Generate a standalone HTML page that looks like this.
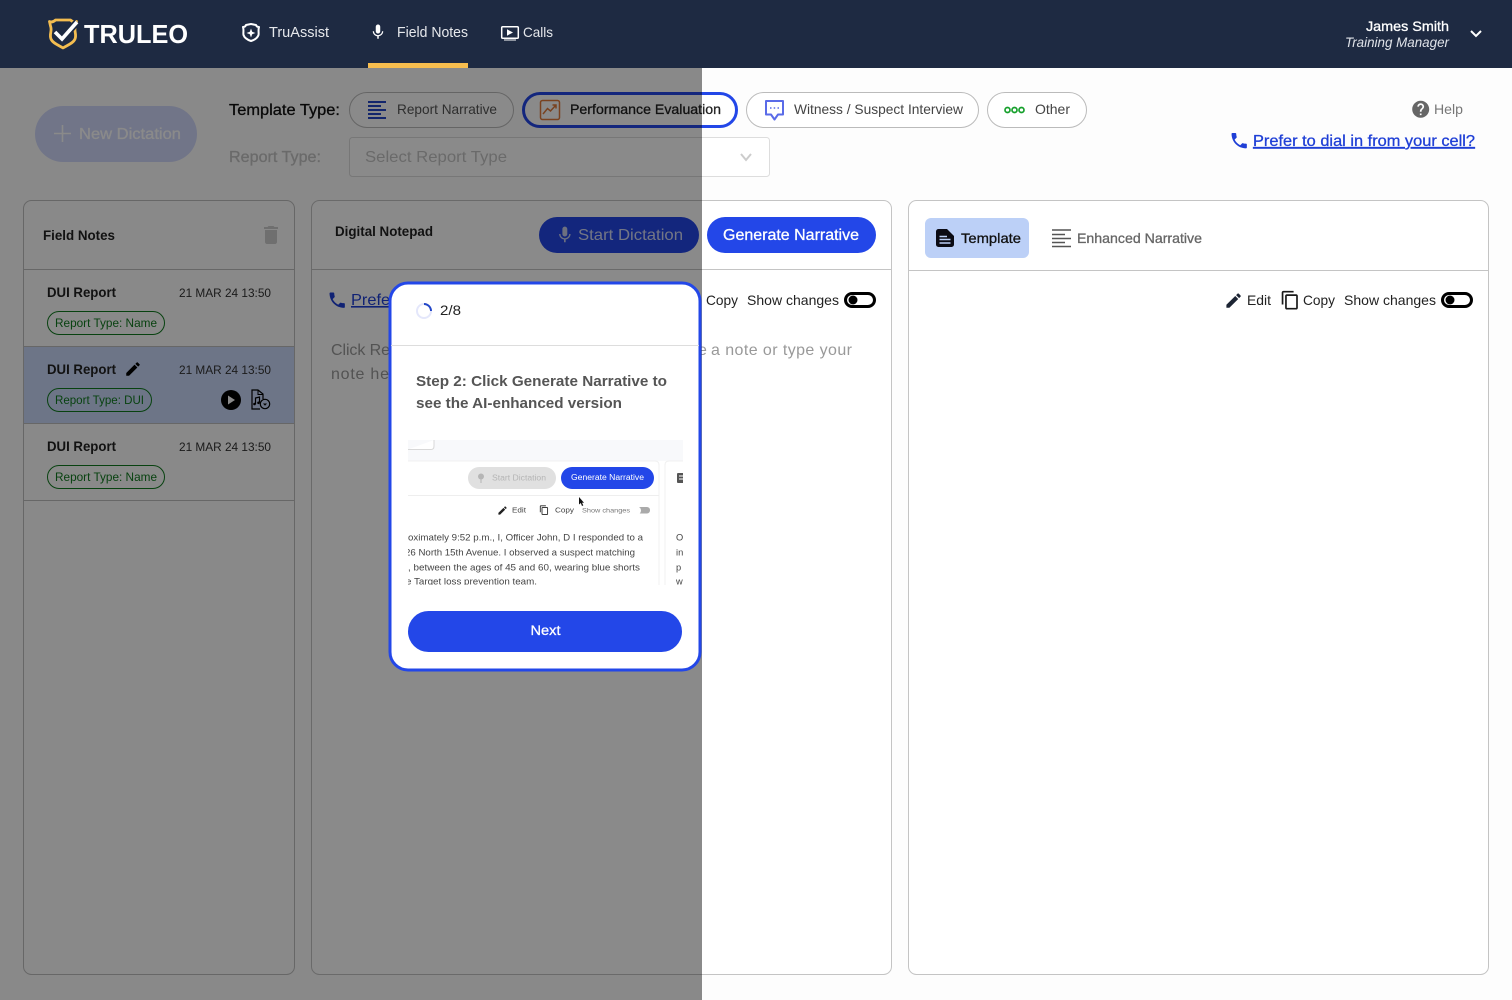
<!DOCTYPE html>
<html lang="en"><head><meta charset="utf-8"><title>Truleo Field Notes</title>
<style>
html,body{margin:0;padding:0;background:#fdfdfd;width:1512px;height:1000px;overflow:hidden}
svg{display:block}
text{font-family:"Liberation Sans",Arial,sans-serif;white-space:pre}
.m{stroke-width:.3}
</style></head><body>
<svg xmlns="http://www.w3.org/2000/svg" width="1512" height="1000" viewBox="0 0 1512 1000">
<defs>
<clipPath id="mini"><rect x="408" y="440" width="275" height="145"/></clipPath>
</defs>
<rect width="1512" height="1000" fill="#fdfdfd"/>

<!-- top controls -->
<rect x="35" y="106" width="162" height="56" rx="28" fill="#d1d8fb"/>
<path d="M54 133.500H71M62.500 125V142" stroke="#fff" stroke-width="1.600" fill="none"/>
<text x="79" y="139" font-size="16" fill="#fff" class="m" stroke="#fff" textLength="102" lengthAdjust="spacingAndGlyphs">New Dictation</text>
<text x="229" y="115" font-size="16" fill="#111" class="m" stroke="#111" textLength="111" lengthAdjust="spacingAndGlyphs">Template Type:</text>
<text x="229" y="162" font-size="16" fill="#c4c4c4" class="m" stroke="#c4c4c4" textLength="92" lengthAdjust="spacingAndGlyphs">Report Type:</text>

<rect x="349.500" y="92.500" width="164" height="35" rx="17.500" fill="#fff" stroke="#bbb"/>
<path d="M368 102H386M368 106H381M368 110H386M368 114H381M368 118H386" stroke="#2347c8" stroke-width="2" fill="none"/>
<text x="397" y="114" font-size="14" fill="#555" textLength="100" lengthAdjust="spacingAndGlyphs">Report Narrative</text>

<rect x="523.500" y="93.500" width="213" height="33" rx="16.500" fill="#fff" stroke="#2347e8" stroke-width="3"/>
<rect x="540.500" y="100.500" width="19" height="19" rx="2" fill="none" stroke="#e07b3c" stroke-width="1.500"/>
<path d="M543 114L547.500 108.500L550.500 111L556 105M552.500 105H556V108.500" stroke="#e07b3c" stroke-width="1.500" fill="none"/>
<text x="570" y="114" font-size="14" fill="#222" class="m" stroke="#222" textLength="151" lengthAdjust="spacingAndGlyphs">Performance Evaluation</text>

<rect x="746.500" y="92.500" width="232" height="35" rx="17.500" fill="#fff" stroke="#bbb"/>
<path d="M766 101H783V114.500H778L774.500 119.500L771 114.500H766Z" fill="none" stroke="#5a6be8" stroke-width="2" stroke-linejoin="round"/>
<path d="M770 108H771.500M773.700 108H775.200M777.500 108H779" stroke="#5a6be8" stroke-width="1.500"/>
<text x="794" y="114" font-size="14" fill="#444" textLength="169" lengthAdjust="spacingAndGlyphs">Witness / Suspect Interview</text>

<rect x="987.500" y="92.500" width="99" height="35" rx="17.500" fill="#fff" stroke="#bbb"/>
<g fill="none" stroke="#16a02c" stroke-width="1.700"><circle cx="1007.500" cy="110" r="2.500"/><circle cx="1014.500" cy="110" r="2.500"/><circle cx="1021.500" cy="110" r="2.500"/></g>
<text x="1035" y="114" font-size="14" fill="#444" textLength="35" lengthAdjust="spacingAndGlyphs">Other</text>

<rect x="349.500" y="137.500" width="420" height="39" rx="3" fill="#fff" stroke="#ddd"/>
<text x="365" y="162" font-size="16" fill="#c4c4c4" textLength="142" lengthAdjust="spacingAndGlyphs">Select Report Type</text>
<path d="M741 154L746 160L751 154" fill="none" stroke="#ccc" stroke-width="2"/>

<path transform="translate(1410.500,99) scale(.85)" fill="#666" d="M12 2C6.480 2 2 6.480 2 12s4.480 10 10 10 10-4.480 10-10S17.520 2 12 2zm1 17h-2v-2h2v2zm2.070-7.750l-.9.920C13.450 12.900 13 13.500 13 15h-2v-.5c0-1.100.450-2.100 1.170-2.830l1.240-1.260c.370-.360.590-.860.590-1.410 0-1.100-.9-2-2-2s-2 .9-2 2H8c0-2.210 1.790-4 4-4s4 1.790 4 4c0 .880-.360 1.680-.930 2.250z"/>
<text x="1434" y="114" font-size="14" fill="#777" textLength="29" lengthAdjust="spacingAndGlyphs">Help</text>
<path transform="translate(1229,130.500) scale(.85)" fill="#1f3fd6" d="M6.620 10.790c1.440 2.830 3.760 5.140 6.590 6.590l2.200-2.200c.270-.270.670-.360 1.020-.240 1.120.370 2.330.570 3.570.570.550 0 1 .450 1 1V20c0 .550-.450 1-1 1-9.390 0-17-7.610-17-17 0-.550.450-1 1-1h3.500c.550 0 1 .450 1 1 0 1.250.200 2.450.570 3.570.110.350.030.740-.250 1.020l-2.200 2.200z"/>
<text x="1253" y="146" font-size="16" fill="#1f3fd6" class="m" stroke="#1f3fd6" text-decoration="underline" textLength="222" lengthAdjust="spacingAndGlyphs">Prefer to dial in from your cell?</text>

<!-- Field Notes panel -->
<rect x="23.500" y="200.500" width="271" height="774" rx="8" fill="#fdfdfd" stroke="#bfbfbf"/>
<text x="43" y="240" font-size="14" font-weight="bold" fill="#222" textLength="72" lengthAdjust="spacingAndGlyphs">Field Notes</text>
<path transform="translate(259,223) scale(1)" fill="#cdcdcd" d="M6 19c0 1.100.9 2 2 2h8c1.100 0 2-.9 2-2V7H6v12zM19 4h-3.500l-1-1h-5l-1 1H5v2h14V4z"/>
<path d="M24 269.500H294" stroke="#bfbfbf"/>
<rect x="24" y="347" width="270" height="76" fill="#cad8f9"/>
<path d="M24 346.500H294M24 423.500H294M24 500.500H294" stroke="#bfbfbf"/>

<text x="47" y="297" font-size="14" font-weight="bold" fill="#222" textLength="69" lengthAdjust="spacingAndGlyphs">DUI Report</text>
<text x="179" y="297" font-size="12" fill="#333" textLength="92" lengthAdjust="spacingAndGlyphs">21 MAR 24 13:50</text>
<rect x="47.500" y="311.500" width="117" height="23" rx="11.500" fill="none" stroke="#0f7a1e"/>
<text x="55" y="327" font-size="12" fill="#0f7a1e" textLength="102" lengthAdjust="spacingAndGlyphs">Report Type: Name</text>

<text x="47" y="374" font-size="14" font-weight="bold" fill="#222" textLength="69" lengthAdjust="spacingAndGlyphs">DUI Report</text>
<path transform="translate(124,360) scale(.75)" fill="#000" d="M3 17.250V21h3.750L17.810 9.940l-3.750-3.750L3 17.250zM20.710 7.040a1 1 0 0 0 0-1.410l-2.340-2.340a1 1 0 0 0-1.410 0l-1.830 1.830 3.750 3.750 1.830-1.830z"/>
<text x="179" y="374" font-size="12" fill="#333" textLength="92" lengthAdjust="spacingAndGlyphs">21 MAR 24 13:50</text>
<rect x="47.500" y="388.500" width="104" height="23" rx="11.500" fill="none" stroke="#0f7a1e"/>
<text x="55" y="404" font-size="12" fill="#0f7a1e" textLength="89" lengthAdjust="spacingAndGlyphs">Report Type: DUI</text>
<circle cx="231" cy="400" r="10" fill="#000"/>
<path d="M228 395.500L235 400L228 404.500Z" fill="#fff"/>
<path d="M263 399V394L258 390H252V409H260" fill="none" stroke="#000" stroke-width="1.200"/>
<path d="M258 390V394.500H263" fill="none" stroke="#000" stroke-width="1"/>
<path d="M255.500 404V398L259.500 397V402.500" fill="none" stroke="#000" stroke-width="1.200"/>
<circle cx="254.500" cy="404" r="1.300" fill="#000"/><circle cx="258.500" cy="402.800" r="1.300" fill="#000"/>
<circle cx="265" cy="404" r="4.700" fill="#cad8f9" stroke="#000" stroke-width="1.200"/>
<path d="M263 403.500H267L265 405.700Z" fill="#000"/>

<text x="47" y="451" font-size="14" font-weight="bold" fill="#222" textLength="69" lengthAdjust="spacingAndGlyphs">DUI Report</text>
<text x="179" y="451" font-size="12" fill="#333" textLength="92" lengthAdjust="spacingAndGlyphs">21 MAR 24 13:50</text>
<rect x="47.500" y="465.500" width="117" height="23" rx="11.500" fill="none" stroke="#0f7a1e"/>
<text x="55" y="481" font-size="12" fill="#0f7a1e" textLength="102" lengthAdjust="spacingAndGlyphs">Report Type: Name</text>

<!-- Digital Notepad panel -->
<rect x="311.500" y="200.500" width="580" height="774" rx="8" fill="#fff" stroke="#c4c4c4"/>
<text x="335" y="236" font-size="14" font-weight="bold" fill="#222" textLength="98" lengthAdjust="spacingAndGlyphs">Digital Notepad</text>
<rect x="539" y="217" width="160" height="36" rx="18" fill="#2347e8"/>
<path transform="translate(555,225) scale(.82)" fill="#c9d0ea" d="M12 14c1.660 0 3-1.340 3-3V5c0-1.660-1.340-3-3-3S9 3.340 9 5v6c0 1.660 1.340 3 3 3zm5.300-3c0 3-2.540 5.100-5.300 5.100S6.700 14 6.700 11H5c0 3.410 2.720 6.230 6 6.720V21h2v-3.280c3.280-.480 6-3.300 6-6.720h-1.700z"/>
<text x="578" y="240" font-size="16" fill="#d5dbf5" textLength="105" lengthAdjust="spacingAndGlyphs">Start Dictation</text>
<rect x="707" y="217" width="169" height="36" rx="18" fill="#2347e8"/>
<text x="723" y="240" font-size="16" fill="#fff" class="m" stroke="#fff" textLength="136" lengthAdjust="spacingAndGlyphs">Generate Narrative</text>
<path d="M312 269.500H891" stroke="#c4c4c4"/>
<path transform="translate(327,290) scale(.85)" fill="#1f3fd6" d="M6.620 10.790c1.440 2.830 3.760 5.140 6.590 6.590l2.200-2.200c.270-.270.670-.360 1.020-.240 1.120.370 2.330.570 3.570.570.550 0 1 .450 1 1V20c0 .550-.450 1-1 1-9.390 0-17-7.610-17-17 0-.550.450-1 1-1h3.500c.550 0 1 .450 1 1 0 1.250.200 2.450.570 3.570.110.350.030.740-.250 1.020l-2.200 2.200z"/>
<text x="351" y="305" font-size="16" fill="#1f3fd6" text-decoration="underline" textLength="222" lengthAdjust="spacingAndGlyphs">Prefer to dial in from your cell?</text>
<text x="706" y="305" font-size="14" fill="#222" textLength="32" lengthAdjust="spacingAndGlyphs">Copy</text>
<text x="747" y="305" font-size="14" fill="#222" textLength="92" lengthAdjust="spacingAndGlyphs">Show changes</text>
<rect x="845.500" y="293.500" width="29" height="13" rx="6.500" fill="#fff" stroke="#000" stroke-width="3"/>
<circle cx="853" cy="300" r="4.500" fill="#000"/>
<text x="331" y="355" font-size="16" fill="#999" textLength="59" lengthAdjust="spacing">Click Re</text>
<text x="698" y="355" font-size="16" fill="#999">e</text>
<text x="711" y="355" font-size="16" fill="#999" textLength="141" lengthAdjust="spacing">a note or type your</text>
<text x="331" y="379" font-size="16" fill="#999" textLength="58" lengthAdjust="spacing">note he</text>

<!-- Right panel -->
<rect x="908.500" y="200.500" width="580" height="774" rx="8" fill="#fff" stroke="#c4c4c4"/>
<rect x="925" y="218" width="104" height="40" rx="6" fill="#bcd0f7"/>
<path d="M938.500 229H947L954 236V244.500A2.500 2.500 0 0 1 951.500 247H938.500A2.500 2.500 0 0 1 936 244.500V231.500A2.500 2.500 0 0 1 938.500 229Z" fill="#0b0b14"/>
<path d="M939.500 236.500H947M939.500 239.500H950.500M939.500 243H950.500" stroke="#bcd0f7" stroke-width="1.600"/>
<text x="961" y="243" font-size="14" fill="#111" class="m" stroke="#111" textLength="60" lengthAdjust="spacingAndGlyphs">Template</text>
<path d="M1052 230H1071M1052 234.500H1065M1052 238.500H1071M1052 242.500H1065M1052 246.500H1071" stroke="#555" stroke-width="1.500" fill="none"/>
<text x="1077" y="243" font-size="14" fill="#666" class="m" stroke="#666" textLength="125" lengthAdjust="spacingAndGlyphs">Enhanced Narrative</text>
<path d="M909 270.500H1488" stroke="#c4c4c4"/>
<path transform="translate(1224,291) scale(.8)" fill="#1c2433" d="M3 17.250V21h3.750L17.810 9.940l-3.750-3.750L3 17.250zM20.710 7.040a1 1 0 0 0 0-1.410l-2.340-2.340a1 1 0 0 0-1.410 0l-1.830 1.830 3.750 3.750 1.830-1.830z"/>
<text x="1247" y="305" font-size="14" fill="#222" textLength="24" lengthAdjust="spacingAndGlyphs">Edit</text>
<path transform="translate(1280,290) scale(.85)" fill="#1a1a1a" d="M16 1H4c-1.100 0-2 .9-2 2v14h2V3h12V1zm3 4H8c-1.100 0-2 .9-2 2v14c0 1.100.9 2 2 2h11c1.100 0 2-.9 2-2V7c0-1.100-.9-2-2-2zm0 16H8V7h11v14z"/>
<text x="1303" y="305" font-size="14" fill="#222" textLength="32" lengthAdjust="spacingAndGlyphs">Copy</text>
<text x="1344" y="305" font-size="14" fill="#222" textLength="92" lengthAdjust="spacingAndGlyphs">Show changes</text>
<rect x="1442.500" y="293.500" width="29" height="13" rx="6.500" fill="#fff" stroke="#000" stroke-width="3"/>
<circle cx="1450" cy="300" r="4.500" fill="#000"/>

<!-- dim overlay -->
<rect x="0" y="68" width="702" height="932" fill="#000" fill-opacity=".46"/>

<!-- header -->
<rect width="1512" height="68" fill="#1e2a42"/>
<path d="M49.500 21.500C52 22.500 54 21.500 55.500 20H70.500C72 21.500 74 22.500 76.500 21.500L75.500 26C73.500 31 77 34 75 39C73.500 43 67 45.500 63 48C59 45.500 52.500 43 51 39C49 34 52.500 31 50.500 26Z" fill="none" stroke="#f4bd50" stroke-width="2.800" stroke-linejoin="round"/>
<path d="M55 32L62 39L77 22" fill="none" stroke="#1e2a42" stroke-width="7"/>
<path d="M55 32L62 39L77 22" fill="none" stroke="#fff" stroke-width="3.600"/>
<text x="84" y="43" font-size="26" font-weight="bold" fill="#fff" textLength="104" lengthAdjust="spacingAndGlyphs">TRULEO</text>

<path d="M246 25L251 24L256 25C256.500 26.500 258 27 259 27C258 30 259 33 258.500 35C257.500 38 254 40 251 41C248 40 244.500 38 243.500 35C243 33 244 30 243 27C244 27 245.500 26.500 246 25Z" fill="none" stroke="#fff" stroke-width="2" stroke-linejoin="round"/>
<path d="M251 28.500L252.200 31.800L255.500 33L252.200 34.200L251 37.500L249.800 34.200L246.500 33L249.800 31.800Z" fill="#fff"/>
<text x="269" y="37" font-size="14.500" fill="#e6e8ec" textLength="60" lengthAdjust="spacingAndGlyphs">TruAssist</text>

<path transform="translate(369,23) scale(.75)" fill="#fff" d="M12 14c1.660 0 3-1.340 3-3V5c0-1.660-1.340-3-3-3S9 3.340 9 5v6c0 1.660 1.340 3 3 3zm5.300-3c0 3-2.540 5.100-5.300 5.100S6.700 14 6.700 11H5c0 3.410 2.720 6.230 6 6.720V21h2v-3.280c3.280-.480 6-3.300 6-6.720h-1.700z"/>
<text x="397" y="37" font-size="14.500" fill="#e6e8ec" textLength="71" lengthAdjust="spacingAndGlyphs">Field Notes</text>
<rect x="368" y="63" width="100" height="5" fill="#f7bd4e"/>

<rect x="501.700" y="26.700" width="16.600" height="11.600" rx="1" fill="none" stroke="#fff" stroke-width="1.500"/>
<path d="M507 29.300L513 32.500L507 35.700Z" fill="#fff"/>
<path d="M504 40H516" stroke="#fff"/>
<text x="523" y="37" font-size="14" fill="#e6e8ec" textLength="30" lengthAdjust="spacingAndGlyphs">Calls</text>

<text x="1449" y="31" font-size="14" fill="#fff" class="m" stroke="#fff" text-anchor="end" textLength="83" lengthAdjust="spacingAndGlyphs">James Smith</text>
<text x="1449" y="47" font-size="14" font-style="italic" fill="#dfe2e8" text-anchor="end" textLength="104" lengthAdjust="spacingAndGlyphs">Training Manager</text>
<path d="M1471 31L1476 36L1481 31" fill="none" stroke="#fff" stroke-width="2"/>

<!-- modal -->
<rect x="390" y="283" width="310" height="387" rx="18" fill="#fff" stroke="#2347e8" stroke-width="3"/>
<circle cx="424" cy="311" r="7" fill="none" stroke="#e4e7fb" stroke-width="2"/>
<path d="M424 304A7 7 0 0 1 431 311" fill="none" stroke="#2347c8" stroke-width="2"/>
<text x="440" y="315" font-size="14" fill="#222" textLength="21" lengthAdjust="spacingAndGlyphs">2/8</text>
<path d="M391 345.500H699" stroke="#ddd"/>
<text x="416" y="386" font-size="15" font-weight="bold" fill="#555" textLength="251" lengthAdjust="spacingAndGlyphs">Step 2: Click Generate Narrative to</text>
<text x="416" y="408" font-size="15" font-weight="bold" fill="#555" textLength="206" lengthAdjust="spacingAndGlyphs">see the AI-enhanced version</text>

<g clip-path="url(#mini)">
<rect x="408" y="440" width="275" height="145" fill="#fff"/>
<rect x="408" y="440" width="275" height="21" fill="#f8f9fb"/>
<path d="M408 449.500H431Q434 449.500 434 446V440" fill="#fff" stroke="#d8d8d8"/>
<rect x="408" y="461" width="251" height="130" fill="#fff"/>
<path d="M408 461H655Q659 461 659 465V585" fill="none" stroke="#f0f0f0"/>
<path d="M683 461H669Q665 461 665 465V585" fill="#fff" stroke="#f0f0f0"/>
<rect x="468" y="467" width="88" height="22" rx="11" fill="#e0e0e0"/>
<circle cx="481" cy="476.500" r="3" fill="#b5b5b5"/><path d="M481 479V483" stroke="#b5b5b5"/>
<text x="492" y="480.500" font-size="8" fill="#b5b5b5" textLength="54" lengthAdjust="spacingAndGlyphs">Start Dictation</text>
<rect x="561" y="467" width="93" height="22" rx="11" fill="#2347e8"/>
<text x="571" y="480" font-size="8" fill="#fff" textLength="73" lengthAdjust="spacingAndGlyphs">Generate Narrative</text>
<path d="M408 495.500H659" stroke="#eee"/>
<rect x="677" y="473" width="8" height="10" rx="1" fill="#555"/>
<path d="M679 476H683M679 479H683" stroke="#fff"/>
<path transform="translate(497,505) scale(.46)" fill="#222" d="M3 17.250V21h3.750L17.810 9.940l-3.750-3.750L3 17.250zM20.710 7.040a1 1 0 0 0 0-1.410l-2.340-2.340a1 1 0 0 0-1.410 0l-1.830 1.830 3.750 3.750 1.830-1.830z"/>
<text x="512" y="512.500" font-size="7.500" fill="#444" textLength="14" lengthAdjust="spacingAndGlyphs">Edit</text>
<path transform="translate(539,505) scale(.43)" fill="#222" d="M16 1H4c-1.100 0-2 .9-2 2v14h2V3h12V1zm3 4H8c-1.100 0-2 .9-2 2v14c0 1.100.9 2 2 2h11c1.100 0 2-.9 2-2V7c0-1.100-.9-2-2-2zm0 16H8V7h11v14z"/>
<text x="555" y="512.500" font-size="7.500" fill="#444" textLength="19" lengthAdjust="spacingAndGlyphs">Copy</text>
<text x="582" y="512.500" font-size="6.500" fill="#777" textLength="48" lengthAdjust="spacingAndGlyphs">Show changes</text>
<rect x="634" y="507" width="16" height="6.500" rx="3" fill="#aaa"/>
<circle cx="637" cy="510.500" r="4" fill="#fff"/>
<path d="M579 497V504.500L580.800 503L582 506L583.300 505.400L582 502.700H584Z" fill="#111"/>
<text x="408" y="540.500" font-size="9.300" fill="#444" textLength="235" lengthAdjust="spacingAndGlyphs">oximately 9:52 p.m., I, Officer John, D I responded to a</text>
<text x="405" y="555.500" font-size="9.300" fill="#444" textLength="230" lengthAdjust="spacingAndGlyphs">26 North 15th Avenue. I observed a suspect matching</text>
<text x="408" y="570.500" font-size="9.300" fill="#444" textLength="232" lengthAdjust="spacingAndGlyphs">, between the ages of 45 and 60, wearing blue shorts</text>
<text x="406" y="584.500" font-size="9.300" fill="#444" textLength="131" lengthAdjust="spacingAndGlyphs">e Target loss prevention team.</text>
<text x="676" y="540.500" font-size="9.300" fill="#444">O</text>
<text x="676" y="555.500" font-size="9.300" fill="#444">in</text>
<text x="676" y="570.500" font-size="9.300" fill="#444">p</text>
<text x="676" y="584.500" font-size="9.300" fill="#444">w</text>
</g>

<rect x="408" y="611" width="274" height="41" rx="20.500" fill="#2347e8"/>
<text x="545.500" y="635" font-size="13.500" fill="#fff" text-anchor="middle" class="m" stroke="#fff" textLength="30" lengthAdjust="spacingAndGlyphs">Next</text>
</svg>
</body></html>
